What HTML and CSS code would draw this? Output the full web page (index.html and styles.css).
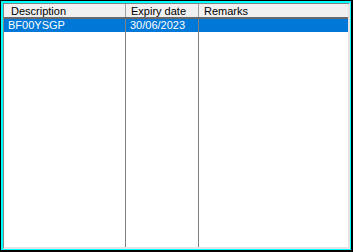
FILE: index.html
```html
<!DOCTYPE html>
<html lang="en">

<head>
    <meta charset="UTF-8">
    <title>Certificates</title>
    <link rel="stylesheet" href="styles.css">
</head>

<body>
    <div class="frame">
        <div class="focus">
            <div class="listview">
                <div class="header">
                    <div class="hcell col-desc">Description</div>
                    <div class="hcell col-exp">Expiry date</div>
                    <div class="hcell col-rem">Remarks</div>
                </div>
                <div class="rows">
                    <div class="row selected">
                        <div class="cell col-desc">BF00YSGP</div>
                        <div class="cell col-exp">30/06/2023</div>
                        <div class="cell col-rem"></div>
                    </div>
                    <!-- empty space keeps the grid lines going down -->
                    <div class="row filler">
                        <div class="cell col-desc"></div>
                        <div class="cell col-exp"></div>
                        <div class="cell col-rem"></div>
                    </div>
                </div>
            </div>
        </div>
    </div>
</body>

</html>
```

FILE: styles.css
```css
body {
    margin: 0;
    background-color: #ffffff;
    font-family: "Liberation Sans", Arial, sans-serif;
    font-size: 11px;
}

.frame {
    width: 353px;
    height: 252px;
    box-sizing: border-box;
    border-top: 1px solid #000000;
    border-left: 1px solid #000000;
    border-right: 2px solid #000000;
    border-bottom: 2px solid #000000;
}

.focus {
    height: 100%;
    box-sizing: border-box;
    border: 2px solid #00ffff;
    border-bottom-width: 1px;
    border-right-width: 1px;
}

.listview {
    height: 100%;
    box-sizing: border-box;
    border-top: 1px solid #808080;
    border-left: 1px solid #808080;
    border-right: 2px solid #e3e3e3;
    border-bottom: 2px solid #e3e3e3;
    display: flex;
    flex-direction: column;
    background-color: #ffffff;
}

.header {
    display: flex;
    height: 13px;
    background-color: #f0f0f0;
    border-bottom: 2px solid #696969;
}

.hcell {
    box-sizing: border-box;
    padding-left: 5px;
    line-height: 14px;
    color: #000000;
    border-right: 1px solid #a0a0a0;
    white-space: nowrap;
}

.hcell.col-desc {
    padding-left: 7px;
}

.rows {
    flex: 1;
    display: flex;
    flex-direction: column;
}

.row {
    display: flex;
    height: 13px;
}

.row.filler {
    flex: 1;
}

.cell {
    box-sizing: border-box;
    padding-left: 4px;
    line-height: 13px;
    border-right: 1px solid #808080;
    white-space: nowrap;
}

.cell.col-desc {
    padding-left: 4px;
}

.row.selected {
    background-color: #0078d7;
    color: #ffffff;
}

.col-desc {
    width: 122px;
}

.col-exp {
    width: 73px;
}

.col-rem {
    width: 149px;
}

.hcell.col-rem,
.cell.col-rem {
    border-right: none;
}
```
